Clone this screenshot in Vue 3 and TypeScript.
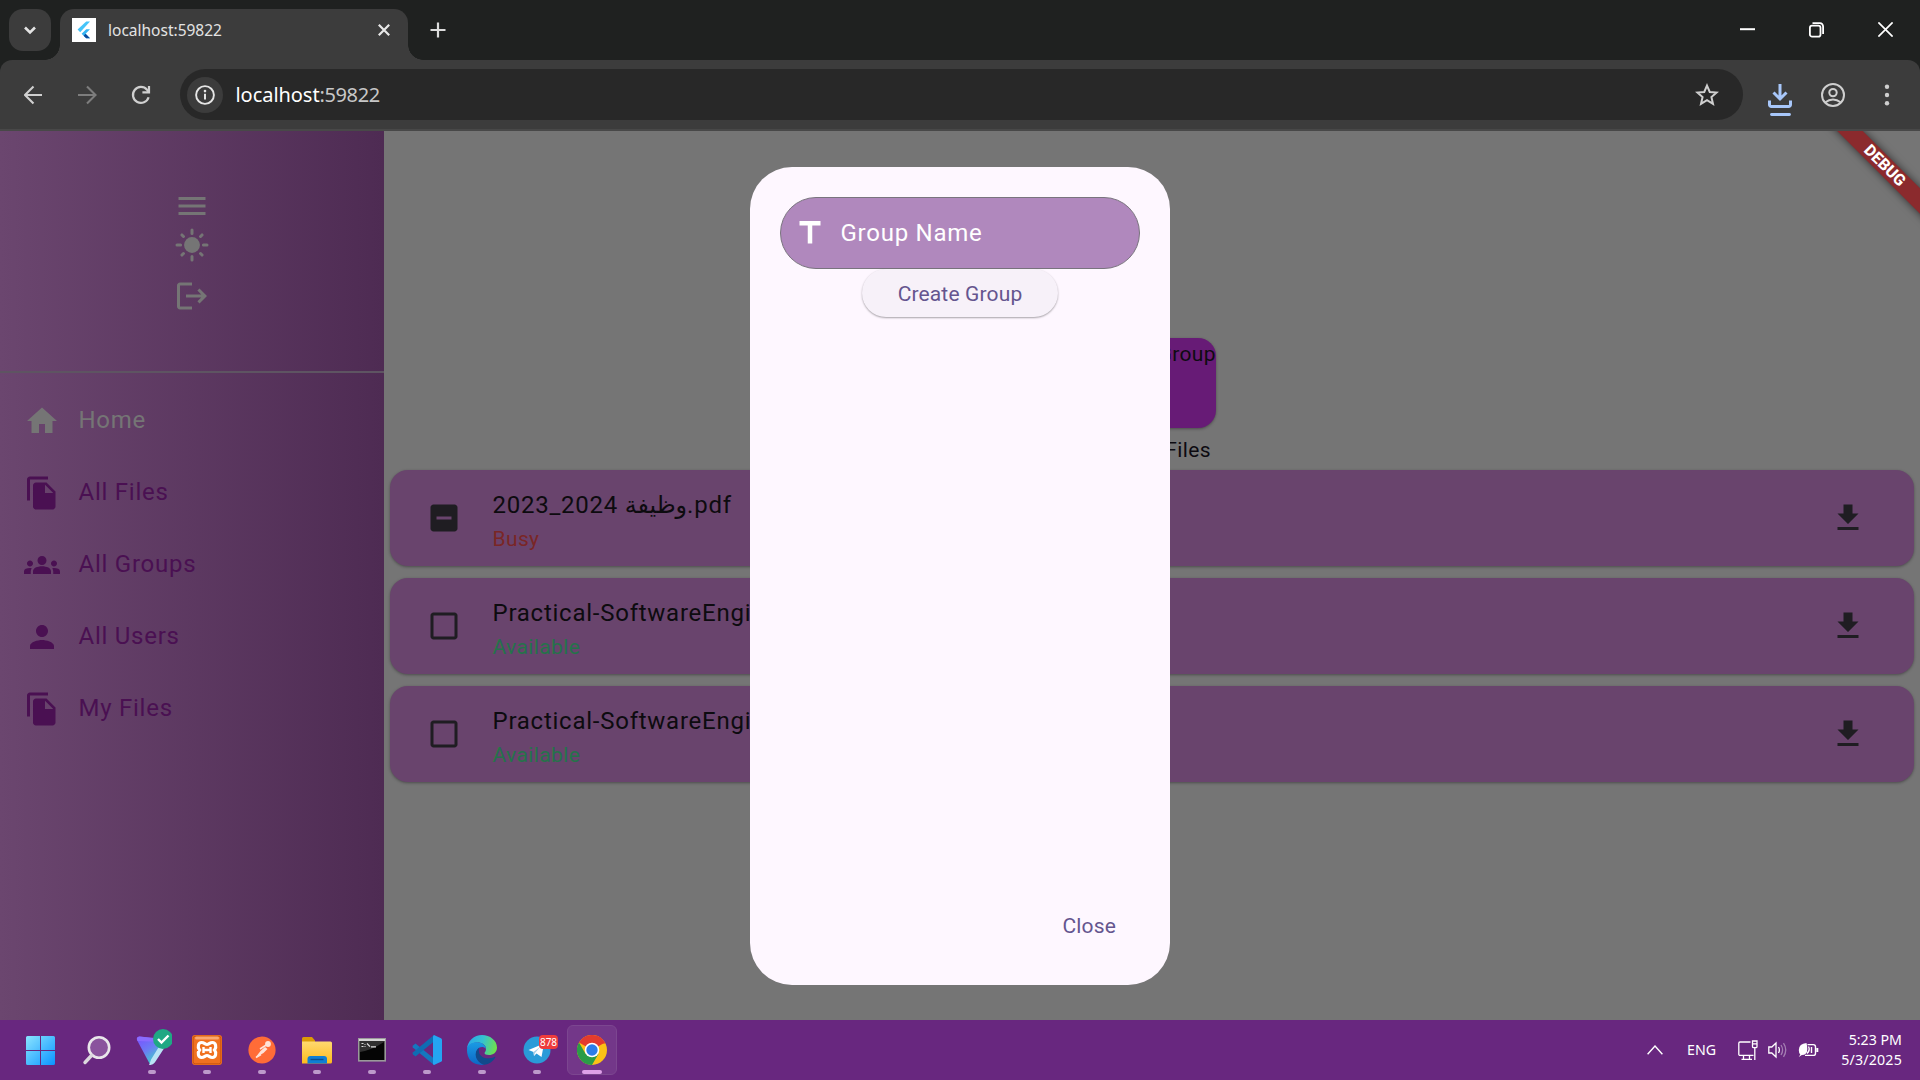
<script setup lang="ts">
interface NavItem {
  label: string
  icon: string
  active?: boolean
}

interface FileRow {
  prefix: string
  arabic?: string
  suffix?: string
  busy: boolean
}

const FILES_ICON =
  'M16 1H4c-1.1 0-2 .9-2 2v14h2V3h12V1zm-1 4l6 6v10c0 1.1-.9 2-2 2H7.99C6.89 23 6 22.1 6 21l.01-14c0-1.1.89-2 1.99-2h7zm-1 7h5.5L14 6.5V12z'

const navItems: NavItem[] = [
  { label: 'Home', icon: 'M10 20v-6h4v6h5v-8h3L12 3 2 12h3v8z', active: true },
  { label: 'All Files', icon: FILES_ICON },
  {
    label: 'All Groups',
    icon: 'M12 12.75c1.63 0 3.07.39 4.24.9 1.08.48 1.76 1.56 1.76 2.73V18H6v-1.61c0-1.18.68-2.26 1.76-2.73 1.17-.52 2.61-.91 4.24-.91zM4 13c1.1 0 2-.9 2-2s-.9-2-2-2-2 .9-2 2 .9 2 2 2zm1.13 1.1C4.76 14.04 4.39 14 4 14c-.99 0-1.93.21-2.78.58C.48 14.9 0 15.62 0 16.43V18h4.5v-1.61c0-.83.23-1.61.63-2.29zM20 13c1.1 0 2-.9 2-2s-.9-2-2-2-2 .9-2 2 .9 2 2 2zm4 3.43c0-.81-.48-1.53-1.22-1.85-.85-.37-1.79-.58-2.78-.58-.39 0-.76.04-1.13.1.4.68.63 1.46.63 2.29V18H24v-1.57zM12 6c1.66 0 3 1.34 3 3s-1.34 3-3 3-3-1.34-3-3 1.34-3 3-3z',
  },
  {
    label: 'All Users',
    icon: 'M12 12c2.21 0 4-1.79 4-4s-1.79-4-4-4-4 1.79-4 4 1.79 4 4 4zm0 2c-2.67 0-8 1.34-8 4v2h16v-2c0-2.66-5.33-4-8-4z',
  },
  { label: 'My Files', icon: FILES_ICON },
]

const files: FileRow[] = [
  { prefix: '2023_2024 ', arabic: 'وظيفة', suffix: '.pdf', busy: true },
  { prefix: 'Practical-SoftwareEngineering.pdf', busy: false },
  { prefix: 'Practical-SoftwareEngineering.pdf', busy: false },
]

const BOX_BUSY =
  'M19 3H5c-1.1 0-2 .9-2 2v14c0 1.1.9 2 2 2h14c1.1 0 2-.9 2-2V5c0-1.1-.9-2-2-2zm-2 10H7v-2h10v2z'
const BOX_EMPTY =
  'M19 5v14H5V5h14m0-2H5c-1.1 0-2 .9-2 2v14c0 1.1.9 2 2 2h14c1.1 0 2-.9 2-2V5c0-1.1-.9-2-2-2z'
</script>

<template>
  <div class="screen">
    <header class="tabstrip">
      <div class="tab-search">
        <svg width="42" height="42" viewBox="0 0 42 42"><path d="M16 18.5l5 5 5-5" fill="none" stroke="#e3e3e3" stroke-width="2.6" /></svg>
      </div>
      <div class="tab">
        <svg class="favicon" width="24" height="24" viewBox="0 0 24 24">
          <rect width="24" height="24" fill="#fff" />
          <path d="M14.2 3.5H18L8.2 14.2 5.6 11.6z" fill="#45c4f9" />
          <path d="M14.2 11.2H18l-4.4 4.5 4.4 4.6h-3.8l-4.6-4.6z" fill="#35b5f3" />
          <path d="M11.6 17.7l2-2 4.4 4.6h-3.8z" fill="#0a4a9c" />
        </svg>
        <span class="tab-title">localhost:59822</span>
        <svg class="tab-close" width="14" height="14" viewBox="0 0 14 14"><path d="M1.8 1.8l10.4 10.4M12.2 1.8L1.8 12.2" stroke="#e8e8e8" stroke-width="2.2" /></svg>
      </div>
      <svg class="new-tab" width="16" height="16" viewBox="0 0 16 16"><path d="M8 .5v15M.5 8h15" stroke="#dcdcdc" stroke-width="2.2" /></svg>
      <div class="win-controls">
        <svg width="15" height="15" viewBox="0 0 15 15"><path d="M0 7.2h15" stroke="#fff" stroke-width="2" /></svg>
        <svg width="15" height="16" viewBox="0.5 0 15 16" fill="none" stroke="#fff" stroke-width="1.8"><rect x="1.400" y="3.6" width="10.600" height="11" rx="2.2" /><path d="M4 1.2h7.5a3.1 3.4 0 0 1 3.100 3.4V12" /></svg>
        <svg width="15" height="15" viewBox="0 0 15 15"><path d="M.4.4l14.2 14.2M14.6.4L.4 14.6" stroke="#fff" stroke-width="1.7" /></svg>
      </div>
    </header>

    <div class="toolbar-back">
      <div class="toolbar">
        <svg class="tb-back" width="20" height="20" viewBox="0 0 20 20" fill="none" stroke="#d0d0d0" stroke-width="2.1"><path d="M18 10H1.500M9.500 1.500L1 10l8.500 8.500" /></svg>
        <svg class="tb-fwd" width="20" height="20" viewBox="0 0 20 20" fill="none" stroke="#7d7d7d" stroke-width="2.1"><path d="M1 10h17M10 1.5l8.5 8.500-8.500 8.500" /></svg>
        <svg class="tb-reload" width="20" height="20" viewBox="0 0 20 20" fill="none" stroke="#d0d0d0" stroke-width="2.2"><path d="M17.6 12.3a8 8 0 1 1-1.6-7.6l1.8 1.9M18 1v6.4h-6.6" /></svg>
        <div class="omnibox">
          <span class="site-info">
            <svg width="22" height="22" viewBox="0 0 22 22"><circle cx="11" cy="11" r="8.9" fill="none" stroke="#e6e6e6" stroke-width="1.9" /><path d="M11 9.8v5.6" stroke="#e6e6e6" stroke-width="2" /><circle cx="11" cy="7.1" r="1.3" fill="#e6e6e6" /></svg>
          </span>
          <span class="url"><b>localhost</b>:59822</span>
          <svg class="star" width="24" height="24" viewBox="0 0 24 24"><path d="M12 2.6l2.75 6.35 6.9.6-5.23 4.55 1.57 6.75L12 17.25l-5.99 3.6 1.57-6.75L2.35 9.55l6.9-.6z" fill="none" stroke="#cfcfcf" stroke-width="2" /></svg>
        </div>
        <svg class="dl" width="24" height="33" viewBox="0 0 24 33" fill="none" stroke="#a8c7fa" stroke-width="3"><path d="M12 0v15M5.500 8.500l6.500 6.500 6.500-6.500" /><path d="M1.5 16.500v4.200a1.800 1.800 0 0 0 1.800 1.800h17.400a1.800 1.800 0 0 0 1.800-1.800v-4.200" /><path d="M3.500 30.500h18" stroke-linecap="round" stroke-width="2.8" /></svg>
        <svg class="avatar" width="24" height="24" viewBox="0 0 24 24" fill="none" stroke="#cfcfcf" stroke-width="2"><circle cx="12" cy="12" r="11" /><circle cx="12" cy="9.600" r="3.700" /><path d="M4.500 19.200c4.500-3.700 10.500-3.700 15 0" /></svg>
        <svg class="dots" width="6" height="24" viewBox="0 0 6 24" fill="#cfcfcf"><circle cx="3" cy="3.700" r="2.200" /><circle cx="3" cy="12" r="2.200" /><circle cx="3" cy="20.300" r="2.200" /></svg>
      </div>
    </div>

    <div class="app">
      <aside class="sidebar">
        <div class="side-head">
          <svg class="mi" viewBox="0 0 24 24"><path d="M3 18h18v-2H3v2zm0-5h18v-2H3v2zm0-7v2h18V6H3z" /></svg>
          <svg class="mi sun" viewBox="0 0 24 24"><circle cx="12" cy="12" r="5.300" /><path d="M12 2v2.400M12 19.600V22M2 12h2.400M19.600 12H22M5.300 5.300l1 1M17.700 17.700l1 1M5.300 18.700l1-1M17.700 6.300l1-1" fill="none" stroke="#757575" stroke-width="2" stroke-linecap="round" /></svg>
          <svg class="mi logout" viewBox="0 0 24 24"><path d="M17 7l-1.410 1.410L18.170 11H8v2h10.170l-2.580 2.580L17 17l5-5zM4 5h8V3H4c-1.100 0-2 .900-2 2v14c0 1.100.900 2 2 2h8v-2H4V5z" /></svg>
        </div>
        <nav class="nav">
          <div v-for="item in navItems" :key="item.label" class="nav-item" :class="{ active: item.active }">
            <svg class="mi" viewBox="0 0 24 24"><path :d="item.icon" /></svg>
            <span>{{ item.label }}</span>
          </div>
        </nav>
      </aside>

      <main class="main">
        <div class="group-card"><span>Create Group</span></div>
        <div class="section-title">Group Files</div>
        <div class="file-list">
          <div v-for="(file, i) in files" :key="i" class="file-card">
            <svg class="mi check" viewBox="0 0 24 24"><path :d="file.busy ? BOX_BUSY : BOX_EMPTY" /></svg>
            <div class="file-text">
              <div class="file-name"><span class="latin">{{ file.prefix }}</span><span v-if="file.arabic" class="arabic">{{ file.arabic }}</span><span v-if="file.suffix" class="latin">{{ file.suffix }}</span></div>
              <div class="file-status" :class="{ busy: file.busy }">{{ file.busy ? 'Busy' : 'Available' }}</div>
            </div>
            <svg class="mi download" viewBox="0 0 24 24"><path d="M19 9h-4V3H9v6H5l7 7 7-7zM5 18v2h14v-2H5z" /></svg>
          </div>
        </div>
      </main>

      <div class="debug"><span>DEBUG</span></div>

      <div class="dialog">
        <div class="field">
          <svg class="mi" viewBox="0 0 24 24"><path d="M5 4v3h5.500v12h3V7H19V4z" /></svg>
          <span>Group Name</span>
        </div>
        <button class="create">Create Group</button>
        <div class="actions"><span>Close</span></div>
      </div>
    </div>

    <footer class="taskbar">
      <div class="task">
        <svg class="win-logo" width="29" height="29" viewBox="0 0 29 29">
          <defs><linearGradient id="win" x1="0" y1="0" x2="1" y2="1"><stop offset="0" stop-color="#8be4ff" /><stop offset="1" stop-color="#0a94ff" /></linearGradient></defs>
          <path d="M1.500 0H14v14H0V1.500A1.500 1.500 0 0 1 1.500 0zM15 0h12.500A1.500 1.500 0 0 1 29 1.500V14H15zM0 15h14v14H1.500A1.500 1.500 0 0 1 0 27.500zM15 15h14v12.500a1.500 1.500 0 0 1-1.500 1.500H15z" fill="url(#win)" />
        </svg>
      </div>
      <div class="task">
        <svg width="30" height="30" viewBox="0 0 30 30"><circle cx="17" cy="12.500" r="10.200" fill="#8a539d" stroke="#e9e6ea" stroke-width="2.600" /><path d="M9.500 20.500L3 27.500" stroke="#dcd8de" stroke-width="3.400" stroke-linecap="round" /></svg>
      </div>
      <div class="task run">
        <svg width="40" height="40" viewBox="0 0 40 40">
          <defs><linearGradient id="vpn" x1="0" y1="0" x2=".7" y2="1"><stop offset="0" stop-color="#7a4dff" /><stop offset=".5" stop-color="#6c7bf5" /><stop offset="1" stop-color="#36e0c0" /></linearGradient></defs>
          <path d="M5.500 12q-2-4 2-4.500l19.500 2.500 5 7-10.500 17q-2.500 2-4.500-.5z" fill="url(#vpn)" />
          <path d="M5.500 12q-2-4 2-4.500l20.500 2 3 3.500z" fill="#8a6bff" />
          <path d="M31 13l-11 18-1.500 4q2 0 3.500-2l10.500-16z" fill="#b9e4f5" stroke="#b9e4f5" stroke-width="2" />
          <circle cx="31" cy="10" r="10" fill="#1fa884" /><path d="M26 10l3.500 3.500 7-7" fill="none" stroke="#fff" stroke-width="2.400" />
        </svg>
      </div>
      <div class="task run">
        <svg width="30" height="30" viewBox="0 0 30 30">
          <rect width="30" height="30" rx="3" fill="#f0711f" /><rect x="1.200" y="1.200" width="27.600" height="27.600" rx="2" fill="none" stroke="#c9560f" stroke-width="1" /><rect x="3" y="1.500" width="24" height="3" rx="1.500" fill="#f9a871" />
          <path d="M9.500 7.500c3 0 3.500 2 5.500 2s2.500-2 5.500-2 4.500 4.500 2 7.500c2.500 3 1 7.500-2 7.500s-3.500-2-5.500-2-2.500 2-5.500 2-4.500-4.500-2-7.500c-2.500-3-1-7.500 2-7.500z" fill="none" stroke="#fff" stroke-width="3.200" />
          <path d="M11.500 12v6M18.500 12v6M11 15h8" stroke="#fff" stroke-width="2.400" />
        </svg>
      </div>
      <div class="task run">
        <svg width="28" height="28" viewBox="0 0 28 28"><circle cx="14" cy="14" r="13.600" fill="#ff6c37" /><path d="M7.500 21.500l5-6.500 4.500-4 2.500 2-4 4z" fill="#ffe3d8" /><circle cx="20" cy="8" r="2.900" fill="#ffe3d8" /><path d="M12 13l7-4.500M13 18.500l-5 3" stroke="#ffe3d8" stroke-width="1.500" /></svg>
      </div>
      <div class="task run">
        <svg width="30" height="28" viewBox="0 0 30 28">
          <defs><linearGradient id="fold" x1="0" y1="0" x2="0" y2="1"><stop offset="0" stop-color="#ffd970" /><stop offset="1" stop-color="#fdbb1d" /></linearGradient></defs>
          <path d="M0 8V2.500A1.500 1.500 0 0 1 1.500 1h8.500l3 3.500V8z" fill="#dc9a06" /><path d="M0 5.500h28.500A1.500 1.500 0 0 1 30 7v19a1.500 1.500 0 0 1-1.500 1.500H0z" fill="url(#fold)" /><path d="M5.500 27.500V23a3 3 0 0 1 3-3H22a3 3 0 0 1 3 3v4.500z" fill="#0f7fd4" /><path d="M8.500 23.500h13" stroke="#0a4f8f" stroke-width="1.400" />
        </svg>
      </div>
      <div class="task run">
        <svg width="28" height="24" viewBox="0 0 28 24"><rect x=".8" y=".8" width="26.400" height="22" fill="#050505" stroke="#9a9a9a" stroke-width="1.600" /><rect x="1" y="1" width="26" height="2" fill="#d5d5d5" /><path d="M2 14Q14 12 26 4v-1H2z" fill="#303030" /><path d="M3.500 5.500h2M3.500 8.500h2M7 6v.8M7 8.300v.8M9 5.500l3 3.200M13 8.900h5" stroke="#ddd" stroke-width="1.200" fill="none" /></svg>
      </div>
      <div class="task run">
        <svg width="30" height="30" viewBox="0 0 30 30"><path d="M1 10.500l2.500-2L22 23.500V30L0.800 12.500q-.6-1 .2-2z" fill="#1577bf" /><path d="M1 19.500l2.500 2L22 6.500V0L.8 17.500q-.6 1 .2 2z" fill="#0f6cb3" /><path d="M22 0l7 3.200q1 .5 1 1.600v20.400q0 1.100-1 1.600L22 30q-1-.5-1-1.500v-27Q21 .5 22 0z" fill="#24a5f2" /></svg>
      </div>
      <div class="task run">
        <svg width="30" height="30" viewBox="0 0 30 30">
          <defs>
            <linearGradient id="edgeTop" x1="0" y1=".3" x2="1" y2=".5"><stop offset="0" stop-color="#2aa7ea" /><stop offset=".5" stop-color="#35c1d0" /><stop offset="1" stop-color="#6fe04c" /></linearGradient>
            <linearGradient id="edgeLow" x1="0" y1="0" x2="0" y2="1"><stop offset="0" stop-color="#1a9be4" /><stop offset="1" stop-color="#0d66c4" /></linearGradient>
          </defs>
          <path d="M0 14C.5 6 7 0 15 0s15 5.500 15 12.500c0 5-4 7.500-8 7.500-3 0-4.500-1-4.500-2 0-.8 1.500-1.500 1.500-4 0-4-4-6.500-8.500-6.500C5 7.500 1.500 10 0 14z" fill="url(#edgeTop)" />
          <path d="M0 15C0 9.500 5 7.300 10 7.300c5.500 0 9 3.500 9 6.700-1-1.500-2.800-2-4-2-3.500 0-6 3.300-6 7 0 5.500 4 9.500 8.500 10.800Q16.300 30 15 30 0 29 0 15z" fill="url(#edgeLow)" />
          <path d="M12 12.800C9 15 8 19 9 22c1.300 4 4.500 7 8.500 7.800 4.500-.7 8.500-3.300 10.700-7 .5-.9-.2-1.300-1-.9C21 25 13 23 12 17q-.3-2 0-4.200z" fill="#114a8b" />
        </svg>
      </div>
      <div class="task run">
        <svg width="28" height="28" viewBox="0 0 28 28"><circle cx="14" cy="14" r="13.500" fill="#2a9bd8" /><path d="M5.500 14L21 7.500 18.500 21l-5-3.500-2.500 2.500-.5-4z" fill="#fff" /><path d="M10.500 16l7-5.500-5.500 6.500-1 3z" fill="#a9cfe8" /></svg>
        <span class="badge">878</span>
      </div>
      <div class="task run current">
        <svg width="30" height="30" viewBox="0 0 30 30"><circle cx="15" cy="15" r="15" fill="#fbc116" /><path d="M15 15L2 7.500a15 15 0 0 1 26 0z" fill="#e33b2e" /><path d="M2 7.500A15 15 0 0 0 15 30l6.500-11.250-13 0z" fill="#2a9c48" /><path d="M15 8h13.200" stroke="#e33b2e" stroke-width="1" /><circle cx="15" cy="15" r="7.300" fill="#fff" /><circle cx="15" cy="15" r="5.700" fill="#2b7de9" /></svg>
      </div>

      <div class="tray">
        <svg class="chev" width="16" height="10" viewBox="0 0 16 10"><path d="M.6 9.300L8 1l7.400 8.300" fill="none" stroke="#fff" stroke-width="1.400" /></svg>
        <span class="lang">ENG</span>
        <svg class="net" width="20" height="21" viewBox="0 0 20 21" fill="none" stroke="#fff" stroke-width="1.300"><path d="M12.500 2H2A1.200 1.200 0 0 0 .8 3.200v11A1.200 1.200 0 0 0 2 15.400h13.500M5.500 15.500v3.500M11.500 15.500v3.500M3.500 19.300h10.500M14.500 1h4.500v5.500q0 1.200-1.200 1.200h-2.100q-1.200 0-1.200-1.200zM14.500 3.800h4.500M16.800 8v12" /></svg>
        <svg class="vol" width="20" height="18" viewBox="0 0 20 18" fill="none" stroke="#fff" stroke-width="1.300"><path d="M.8 6h3L8 2v14l-4.200-4h-3z" /><path d="M10.500 6q1.800 3 0 6" /><path d="M13 4q3.200 5 0 10" opacity=".4" /><path d="M15.500 2.200q4.500 6.800 0 13.600" opacity=".4" /></svg>
        <svg class="bat" width="21" height="16" viewBox="0 0 21 16" fill="none" stroke="#fff" stroke-width="1.400"><path d="M9.500 2.600h5.800q2.200 0 2.200 2.200v6.400q0 2.200-2.200 2.200H7" /><path d="M19.300 6v4" stroke-width="2" /><path d="M8.500 1Q1 1.500 .8 8q0 3 1.500 4.500L.8 15l3-2q5.500 0 5.500-6 0-3-.8-6z" fill="#fff" stroke="none" /><path d="M10.500 4.500q2 3.500-1.500 7M13.500 5v6" /></svg>
        <div class="clock"><span>5:23 PM</span><span class="date">5/3/2025</span></div>
      </div>
    </footer>
  </div>
</template>

<style>
body {
  background: #1f2120;
  overflow: hidden;
}
</style>

<style scoped>
.screen {
  width: 1920px;
  height: 1080px;
  display: flex;
  flex-direction: column;
  overflow: hidden;
  font-family: Roboto, "DejaVu Sans", sans-serif;
}
svg {
  display: block;
  flex: none;
}
span {
  white-space: nowrap;
}

/* Browser chrome */
.tabstrip {
  height: 60px;
  box-sizing: border-box;
  padding: 9px 27px 0 9px;
  display: flex;
  background: #1f2120;
  font-family: "Noto Sans", "Open Sans", sans-serif;
}
.tab-search {
  width: 42px;
  height: 42px;
  border-radius: 14px;
  background: #3c3c3c;
}
.tab {
  position: relative;
  width: 348px;
  height: 51px;
  box-sizing: border-box;
  margin-left: 9px;
  padding: 0 17px 9px 12px;
  display: flex;
  align-items: center;
  border-radius: 14px 14px 0 0;
  background: #3c3c3c;
}
.tab::before,
.tab::after {
  content: "";
  position: absolute;
  bottom: 0;
  width: 15px;
  height: 15px;
}
.tab::before {
  left: -15px;
  background: radial-gradient(circle at 0 0, transparent 14.5px, #3c3c3c 15px);
}
.tab::after {
  right: -15px;
  background: radial-gradient(circle at 100% 0, transparent 14.5px, #3c3c3c 15px);
}
.tab-title {
  margin-left: 12px;
  flex: 1;
  font-size: 15.5px;
  line-height: 24px;
  color: #e3e3e3;
}
.new-tab {
  margin: 13px 0 0 22px;
}
.win-controls {
  margin: 13px 0 0 auto;
  display: flex;
  gap: 54px;
}
.toolbar-back {
  background: #1f2120;
}
.toolbar {
  height: 71px;
  box-sizing: border-box;
  padding-left: 24px;
  padding-bottom: 2px;
  display: flex;
  align-items: center;
  border-bottom: 2px solid #484848;
  border-radius: 12px 12px 0 0;
  background: #3c3c3c;
}
.toolbar .tb-back,
.toolbar .tb-fwd,
.toolbar .tb-reload {
  margin-top: 3px;
}
.tb-fwd {
  margin-left: 33px;
}
.tb-reload {
  margin-left: 34px;
}
.omnibox {
  width: 1563px;
  height: 51px;
  box-sizing: border-box;
  margin: 2px 0 0 29px;
  padding: 0 24px 0 7px;
  display: flex;
  align-items: center;
  border-radius: 26px;
  background: #282828;
}
.site-info {
  width: 36px;
  height: 36px;
  display: flex;
  align-items: center;
  justify-content: center;
  border-radius: 50%;
  background: #3c3c3c;
}
.url {
  flex: 1;
  margin-left: 12.5px;
  font: 20px/30px "Noto Sans", "Open Sans", sans-serif;
  letter-spacing: -0.4px;
  color: #c7c7c7;
}
.url b {
  font-weight: 400;
  letter-spacing: -0.05px;
  color: #fff;
}
.dl {
  margin: 13px 0 0 25px;
}
.avatar {
  margin: 3px 0 0 29px;
}
.dots {
  margin: 3px 0 0 39px;
}

/* Application page under the modal scrim */
.app {
  position: relative;
  height: 889px;
  display: flex;
  overflow: hidden;
  background: #757575;
}
.mi {
  width: 36px;
  height: 36px;
  fill: currentColor;
}
.sidebar {
  width: 384px;
  flex: none;
  background: linear-gradient(90deg, #6b466f, #4e2b53);
}
.side-head {
  height: 242px;
  box-sizing: border-box;
  padding-top: 57px;
  display: flex;
  flex-direction: column;
  align-items: center;
  border-bottom: 2px solid #5e5462;
  color: #757575;
}
.sun {
  margin-top: 3px;
}
.logout {
  margin-top: 15px;
}
.nav {
  padding: 12px 24px 0;
}
.nav-item {
  height: 72px;
  display: flex;
  align-items: center;
  gap: 18.5px;
  color: #4a1052;
  font-size: 24px;
  line-height: 36px;
  letter-spacing: 0.75px;
}
.nav-item span {
  margin-top: -2px;
}
.nav-item.active {
  color: #757575;
}
.main {
  flex: 1;
  padding: 207px 6px 0;
}
.group-card {
  width: 128px;
  height: 90px;
  margin: 0 auto;
  display: flex;
  justify-content: flex-end;
  border-radius: 18px;
  background: #671b76;
  box-shadow: 0 1px 3px rgba(0, 0, 0, 0.35);
  font-size: 21px;
  line-height: 32px;
  letter-spacing: 0.375px;
  color: #0e0b11;
}
.section-title {
  width: 118px;
  margin: 7px auto 0;
  font-size: 21px;
  line-height: 31px;
  letter-spacing: 0.375px;
  text-align: right;
  white-space: nowrap;
  color: #0e0b11;
}
.file-list {
  margin-top: 4px;
  display: flex;
  flex-direction: column;
  gap: 12px;
}
.file-card {
  height: 96px;
  box-sizing: border-box;
  padding: 0 48px 0 36px;
  display: flex;
  align-items: center;
  border-radius: 18px;
  background: #69446d;
  box-shadow: 0 1px 3px rgba(0, 0, 0, 0.35);
  color: #1f1d22;
}
.file-text {
  flex: 1;
  height: 79px;
  margin: 17px 0 0 30.5px;
}
.file-name {
  height: 36px;
  display: flex;
  align-items: baseline;
  font-size: 24px;
  line-height: 36px;
  letter-spacing: 0.75px;
  color: #0d0b0f;
}
.latin {
  white-space: pre;
}
.arabic {
  font-family: "DejaVu Sans", sans-serif;
  font-size: 23.8px;
  line-height: 20px;
  letter-spacing: 0;
}
.file-status {
  margin-top: 1px;
  font-size: 21px;
  line-height: 30px;
  letter-spacing: 0.375px;
  color: #25734a;
}
.file-status.busy {
  color: #7a2626;
}
.debug {
  position: absolute;
  top: 26px;
  right: -55px;
  width: 180px;
  height: 18px;
  transform: rotate(45deg);
  display: flex;
  align-items: center;
  justify-content: center;
  background: #8b2a2d;
  box-shadow: 0 0 9px rgba(0, 0, 0, 0.6);
  font-size: 16px;
  font-weight: 800;
  line-height: 18px;
  color: #fff;
}
.debug span {
  margin-right: 1px;
}

/* Dialog */
.dialog {
  position: absolute;
  top: 36px;
  left: 750px;
  width: 420px;
  height: 818px;
  box-sizing: border-box;
  padding: 30px;
  display: flex;
  flex-direction: column;
  align-items: center;
  border-radius: 42px;
  background: #fef7ff;
}
.field {
  width: 360px;
  height: 72px;
  box-sizing: border-box;
  padding-left: 11px;
  display: flex;
  align-items: center;
  gap: 12.5px;
  border: 1.5px solid #79747e;
  border-radius: 36px;
  background: #b088bd;
  color: #fff;
  font-size: 24px;
  line-height: 36px;
  letter-spacing: 0.75px;
}
.create {
  width: 196px;
  height: 48px;
  padding: 2px 0 0;
  border: 0;
  border-radius: 24px;
  background: #f7f1f9;
  box-shadow: 0 1px 2px rgba(0, 0, 0, 0.35);
  font: 400 21px/46px Roboto, sans-serif;
  letter-spacing: 0.15px;
  color: #65558f;
}
.actions {
  width: 360px;
  margin-top: auto;
  padding: 0 24px 13px 0;
  box-sizing: border-box;
  text-align: right;
  font-size: 21px;
  line-height: 32px;
  letter-spacing: 0.15px;
  color: #65558f;
}

/* Taskbar */
.taskbar {
  height: 60px;
  box-sizing: border-box;
  padding: 0 18px 0 14px;
  display: flex;
  background: #68277f;
}
.task {
  position: relative;
  width: 55px;
  height: 60px;
  display: flex;
  align-items: center;
  justify-content: center;
}
.task.run::after {
  content: "";
  position: absolute;
  left: 24px;
  bottom: 6px;
  width: 8px;
  height: 4px;
  border-radius: 2px;
  background: #bd9acb;
}
.task.run > svg {
  position: relative;
}
.task.current::before {
  content: "";
  position: absolute;
  top: 5px;
  left: 3px;
  width: 48px;
  height: 48px;
  border: 1px solid #7c4690;
  border-radius: 6px;
  background: #733789;
}
.task.run.current::after {
  left: 18px;
  width: 20px;
  background: #dfa0e8;
}
.win-logo {
  margin-right: 3px;
}
.task.run:nth-child(3) > svg {
  top: -1px;
  left: 0;
}
.badge {
  position: absolute;
  top: 15px;
  left: 30px;
  width: 19px;
  height: 14px;
  border-radius: 4px;
  background: #ee3c3c;
  font: 10px/14px "Noto Sans", sans-serif;
  text-align: center;
  color: #fff;
}
.tray {
  margin-left: auto;
  display: flex;
  align-items: center;
  font-family: "Noto Sans", "Open Sans", sans-serif;
  font-size: 14.2px;
  color: #fff;
}
.lang {
  margin: -1px 0 0 24px;
}
.net {
  margin-left: 22px;
}
.vol {
  margin-left: 10px;
}
.bat {
  margin-left: 10px;
}
.clock {
  width: 62px;
  margin-left: 21px;
  display: flex;
  flex-direction: column;
  align-items: flex-end;
  line-height: 20px;
}
.date {
  letter-spacing: 0.2px;
}
</style>
